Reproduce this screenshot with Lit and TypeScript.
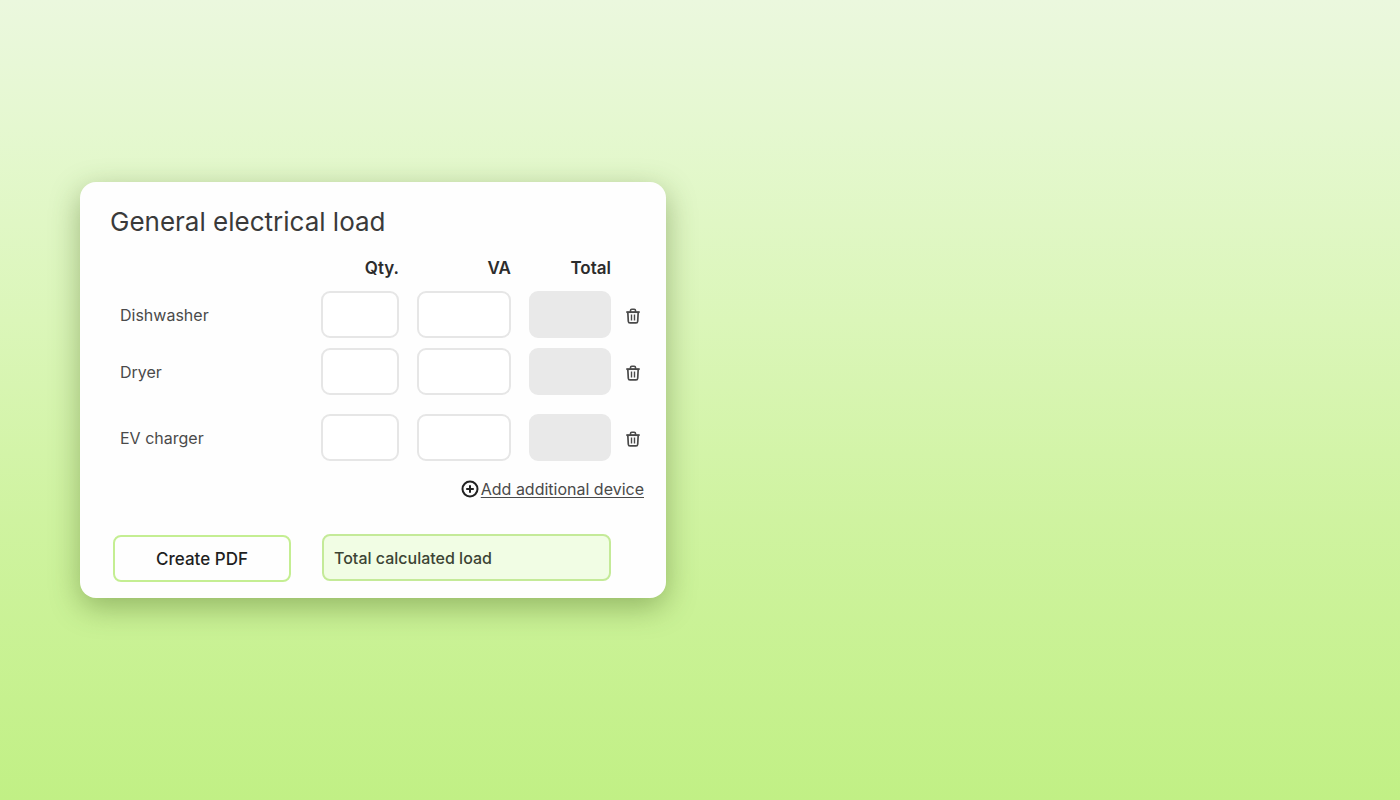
import { LitElement, html, css } from "lit";
import { customElement, state } from "lit/decorators.js";
import { classMap } from "lit/directives/class-map.js";

interface Device {
  id: number;
  name: string;
  qty: string;
  va: string;
  spaced?: boolean;
}

@customElement("app-root")
export class AppRoot extends LitElement {
  @state() private devices: Device[] = [
    { id: 1, name: "Dishwasher", qty: "", va: "" },
    { id: 2, name: "Dryer", qty: "", va: "" },
    { id: 3, name: "EV charger", qty: "", va: "", spaced: true },
  ];

  private nextId = 4;

  static styles = css`
    :host {
      display: block;
      font-family: Inter, "Liberation Sans", sans-serif;
      font-size: 16px;
      line-height: 20px;
      color: #4a4a4a;
    }
    .page {
      box-sizing: border-box;
      min-height: 100vh;
      padding: 20px 80px 40px;
      display: flex;
      align-items: center;
      background: linear-gradient(
        to bottom,
        #ebf8de 0%,
        #e5f8d0 16%,
        #dbf6b9 40%,
        #cff3a0 65%,
        #c1f085 100%
      );
    }
    .card {
      box-sizing: border-box;
      width: 100%;
      max-width: 586px;
      padding: 24px 20px 16px 30px;
      border-radius: 16px;
      background: #fefefe;
      box-shadow: 0 9px 30px rgba(60, 90, 20, 0.4);
    }
    .title {
      margin: 0 0 20px;
      font-size: 26px;
      line-height: 32px;
      font-weight: 400;
      color: #3a3a3a;
    }
    .loads {
      width: 100%;
      table-layout: fixed;
      border-collapse: collapse;
    }
    .col-qty { width: 96px; }
    .col-va { width: 112px; }
    .col-total { width: 90px; }
    .col-remove { width: 27px; }
    th, td {
      padding: 0 0 10px;
      text-align: left;
      font-weight: 400;
    }
    .head {
      padding: 0 18px 13px 0;
      text-align: right;
      font-size: 17px;
      font-weight: 600;
      color: #2c2c2c;
    }
    .head-total { padding-right: 8px; }
    .name { padding-left: 10px; }
    .wide { padding-right: 18px; }
    .sum { padding-right: 8px; }
    .spaced > * { padding-top: 9px; }
    .field {
      display: block;
      box-sizing: border-box;
      width: 100%;
      height: 47px;
      padding: 0 10px;
      border: 2px solid #e6e6e6;
      border-radius: 9px;
      background: #ffffff;
      font: inherit;
      color: inherit;
      text-align: right;
    }
    .field-total {
      border-color: #e9e9e9;
      background: #e9e9e9;
    }
    button {
      font: inherit;
      color: inherit;
      cursor: pointer;
    }
    .remove {
      display: flex;
      align-items: center;
      justify-content: center;
      width: 27px;
      height: 47px;
      padding: 2px 0 0;
      border: 0;
      background: none;
    }
    .add {
      display: flex;
      align-items: center;
      gap: 2px;
      margin: 8px 2px 0 auto;
      padding: 0;
      border: 0;
      background: none;
    }
    .add-text {
      text-decoration: underline;
      text-decoration-thickness: 1px;
      text-underline-offset: 2px;
    }
    .footer {
      display: grid;
      grid-template-columns: 178px 1fr;
      gap: 31px;
      margin-top: 35px;
      padding: 0 35px 0 3px;
    }
    .create {
      height: 47px;
      margin-top: 1px;
      border: 2px solid #c4ee92;
      border-radius: 8px;
      background: #fefefe;
      font-size: 17px;
      font-weight: 500;
      color: #1f1f1f;
    }
    .result {
      display: flex;
      align-items: center;
      justify-content: space-between;
      box-sizing: border-box;
      height: 47px;
      padding: 0 10px;
      border: 2px solid #c4ea98;
      border-radius: 8px;
      background: #f1fde4;
      font-weight: 500;
      color: #3c4434;
    }
    svg { display: block; flex: none; }
  `;

  private edit(id: number, key: "qty" | "va", e: Event) {
    const value = (e.target as HTMLInputElement).value;
    this.devices = this.devices.map((d) => (d.id === id ? { ...d, [key]: value } : d));
  }

  private load(d: Device) {
    return Number(d.qty) * Number(d.va) || 0;
  }

  private add() {
    this.devices = [...this.devices, { id: this.nextId++, name: "Device", qty: "", va: "" }];
  }

  private remove(id: number) {
    this.devices = this.devices.filter((d) => d.id !== id);
  }

  private row(d: Device) {
    return html`<tr class=${classMap({ spaced: !!d.spaced })}>
      <th class="name" scope="row">${d.name}</th>
      <td class="wide">
        <input class="field" inputmode="numeric" aria-label="${d.name} quantity"
          .value=${d.qty} @input=${(e: Event) => this.edit(d.id, "qty", e)} />
      </td>
      <td class="wide">
        <input class="field" inputmode="numeric" aria-label="${d.name} VA"
          .value=${d.va} @input=${(e: Event) => this.edit(d.id, "va", e)} />
      </td>
      <td class="sum">
        <input class="field field-total" readonly aria-label="${d.name} total"
          .value=${this.load(d) ? String(this.load(d)) : ""} />
      </td>
      <td>
        <button class="remove" aria-label="Remove ${d.name}" @click=${() => this.remove(d.id)}>
          <svg width="14" height="16" viewBox="0 0 14 16" fill="none" stroke="#4a4a4a"
            stroke-width="1.9" stroke-linejoin="round">
            <path d="M0.3 4.1h13.4" />
            <path d="M4.5 4V2.6Q4.5 1.3 5.8 1.3h2.4Q9.5 1.3 9.5 2.6V4" stroke-width="1.6" />
            <path d="M1.8 4l.5 9.2q.1 1.7 1.7 1.7h6q1.6 0 1.7-1.7L12.2 4" stroke-width="1.7" />
            <path d="M5.5 6.6v5.8M8.5 6.6v5.8" stroke-width="1.4" />
          </svg>
        </button>
      </td>
    </tr>`;
  }

  render() {
    const total = this.devices.reduce((sum, d) => sum + this.load(d), 0);
    return html`<main class="page">
      <section class="card">
        <h1 class="title">General electrical load</h1>
        <table class="loads">
          <colgroup>
            <col /><col class="col-qty" /><col class="col-va" />
            <col class="col-total" /><col class="col-remove" />
          </colgroup>
          <thead>
            <tr>
              <td></td>
              <th class="head" scope="col">Qty.</th>
              <th class="head" scope="col">VA</th>
              <th class="head head-total" scope="col">Total</th>
              <td></td>
            </tr>
          </thead>
          <tbody>${this.devices.map((d) => this.row(d))}</tbody>
        </table>
        <button class="add" @click=${this.add}>
          <svg width="18" height="18" viewBox="0 0 18 18" fill="none" stroke="#222222" stroke-width="2">
            <circle cx="9" cy="9" r="7.5" />
            <path d="M9 5.2v7.6M5.2 9h7.6" />
          </svg>
          <span class="add-text">Add additional device</span>
        </button>
        <div class="footer">
          <button class="create">Create PDF</button>
          <div class="result">
            <span>Total calculated load</span>
            <output>${total ? total : ""}</output>
          </div>
        </div>
      </section>
    </main>`;
  }
}
